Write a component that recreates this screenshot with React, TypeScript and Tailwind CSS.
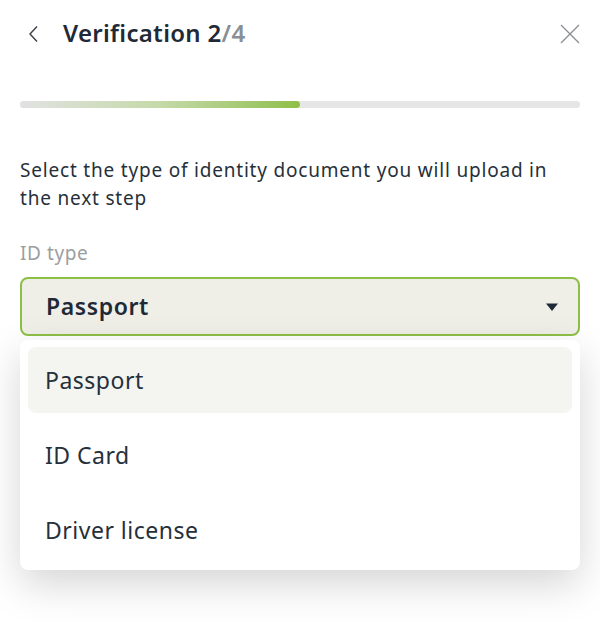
import React, { useState } from 'react';

const options = ['Passport', 'ID Card', 'Driver license'];

const App: React.FC = () => {
  const [selected, setSelected] = useState('Passport');

  return (
    <div className="w-[600px] h-[622px] bg-white text-[#1f2a36] relative" style={{ fontFamily: '"Noto Sans", "Open Sans", sans-serif' }}>
      {/* header */}
      <div className="flex items-center h-[68px] px-5">
        <button className="w-[26px] flex items-center justify-start pl-[8px] text-[#3a3f45]">
          <svg width="12" height="18" viewBox="0 0 12 18" fill="none" stroke="currentColor" strokeWidth="1.4">
            <path d="M9 1.5 2 9l7 7.5" />
          </svg>
        </button>
        <h1 className="ml-[17px] text-[24px] font-semibold tracking-[0.3px] -mt-[2px]">
          Verification 2<span className="text-[#8a8f94]">/4</span>
        </h1>
        <button className="ml-auto text-[#8a8e92]">
          <svg width="20" height="20" viewBox="0 0 20 20" stroke="currentColor" strokeWidth="1.3">
            <path d="M1 1l18 18M19 1 1 19" />
          </svg>
        </button>
      </div>

      {/* progress */}
      <div className="px-5 mt-[33px]">
        <div className="h-[7px] rounded-full bg-[#e6e6e6]">
          <div className="h-full w-[280px] rounded-full bg-gradient-to-r from-[#e2e2e2] via-[#c5d9a8] to-[#8fbf45]" />
        </div>
      </div>

      {/* body */}
      <div className="px-5 mt-[48px]">
        <p className="text-[19px] leading-[28px] tracking-[0.8px] text-[#26303a]">
          Select the type of identity document you will upload in the next step
        </p>
        <div className="mt-[27px] text-[19px] leading-[28px] tracking-[0.6px] text-[#9a9ea2]">ID type</div>

        <div className="relative mt-[10px]">
          <button className="w-full h-[59px] flex items-center justify-between pl-[24px] pr-[19px] rounded-[8px] border-2 border-[#8dbf47] bg-[#efefe8]">
            <span className="text-[23px] font-semibold tracking-[0.6px]">{selected}</span>
            <svg width="14" height="10" viewBox="0 0 14 10" fill="#1f2a36">
              <path d="M1 1.5h12L7 9z" />
            </svg>
          </button>

          <div className="absolute left-0 right-0 top-[63px] z-10 bg-white rounded-[8px] px-[8px] py-[7px] shadow-[0_14px_40px_rgba(0,0,0,0.17)]">
            {options.map((o) => (
              <div
                key={o}
                onClick={() => setSelected(o)}
                className={
                  'h-[66px] mb-[9px] last:mb-0 flex items-center pl-[17px] rounded-[8px] text-[23px] tracking-[0.5px] text-[#26303a] cursor-pointer ' +
                  (o === selected ? 'bg-[#f4f5f0]' : '')
                }
              >
                {o}
              </div>
            ))}
          </div>
        </div>
      </div>
    </div>
  );
};

export default App;
